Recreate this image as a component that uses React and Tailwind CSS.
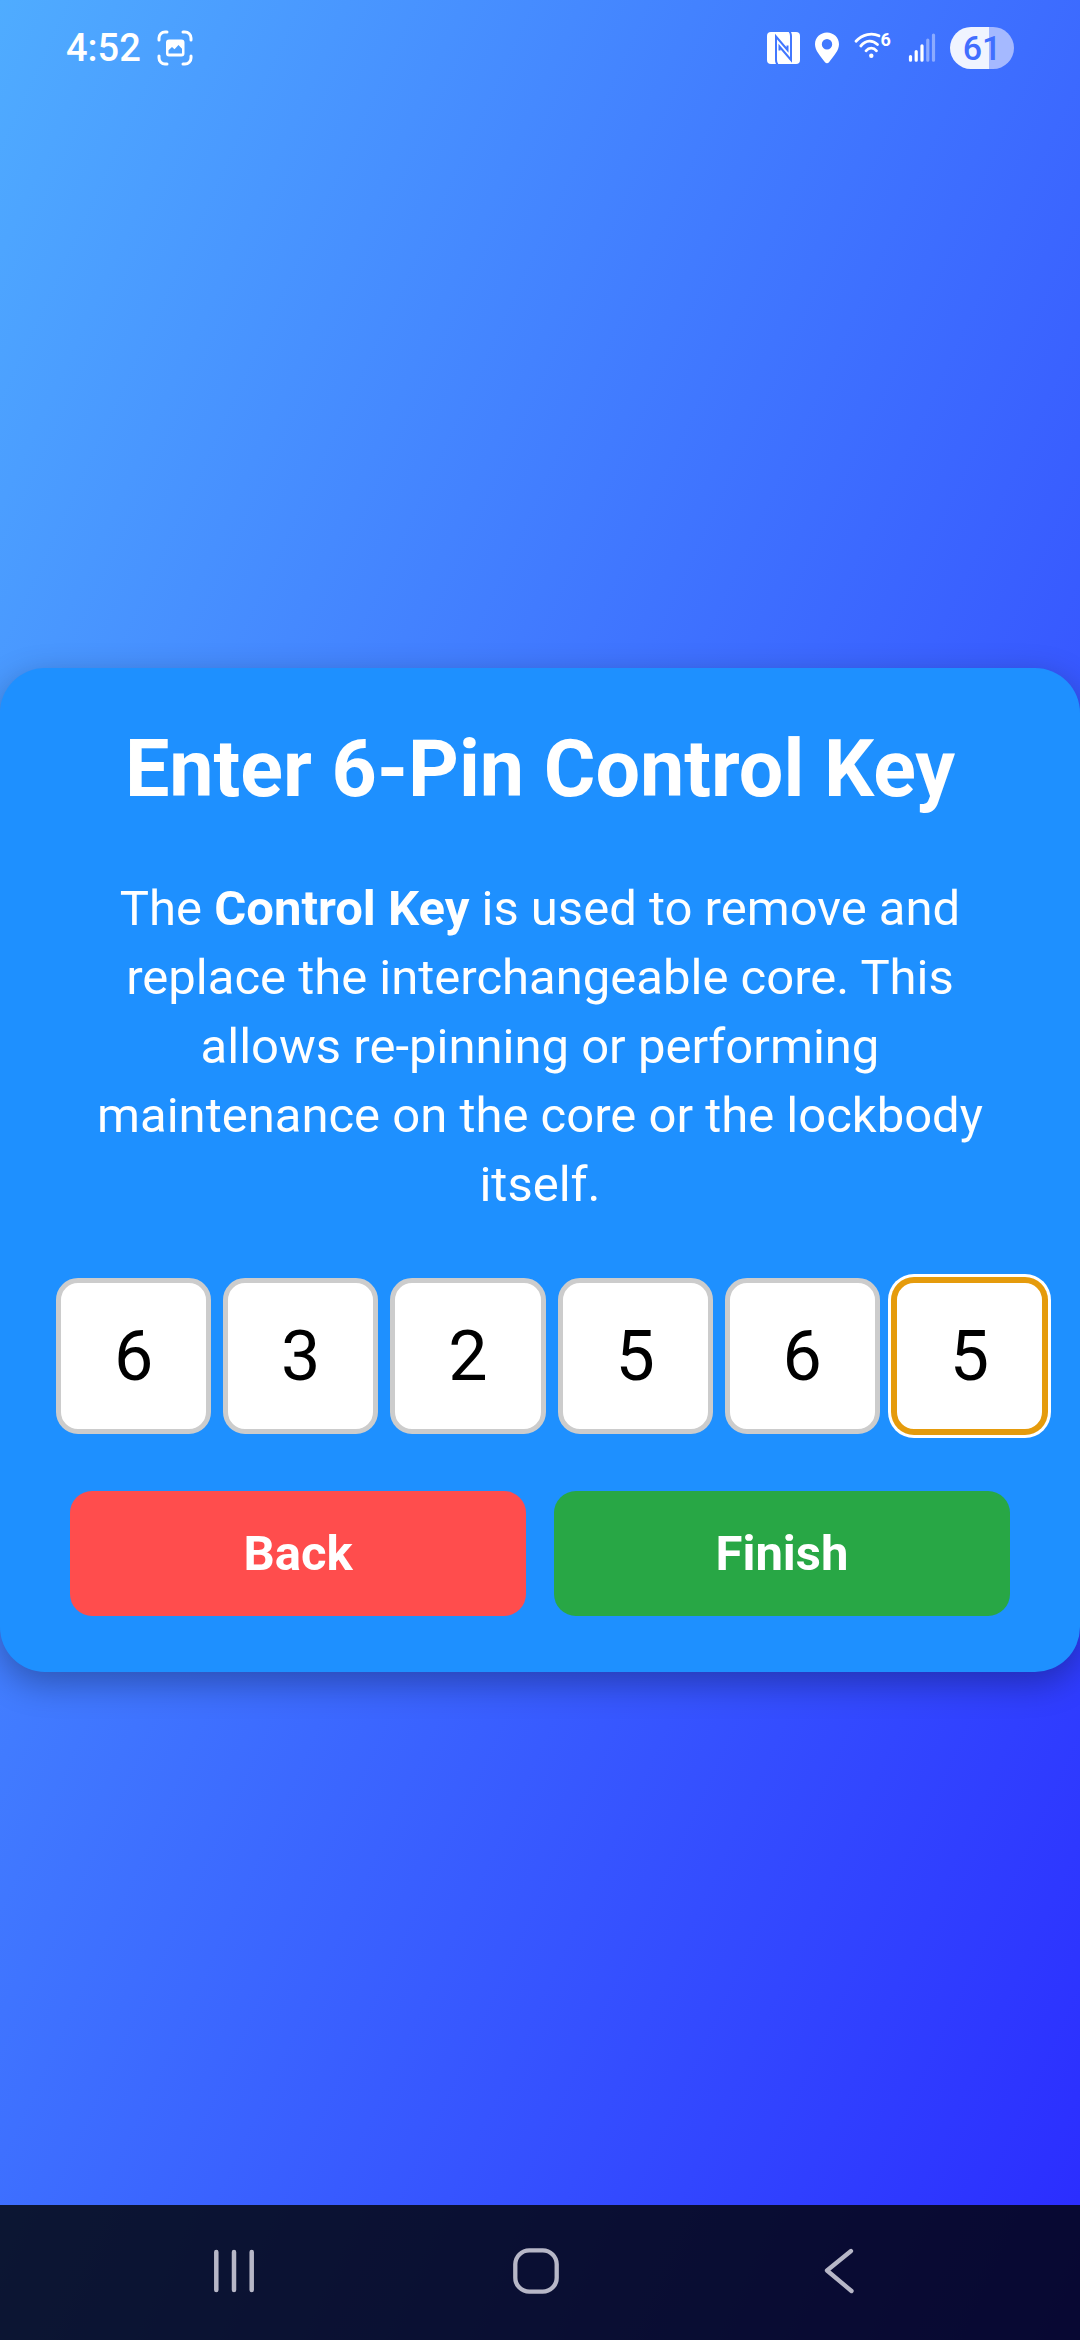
import { useState } from "react";

function CaptureIcon() {
  return (
    <svg aria-hidden="true" className="size-9" viewBox="0 0 36 36" fill="none">
      <path d="M2 10V8a6 6 0 0 1 6-6h2M26 2h2a6 6 0 0 1 6 6v2M34 26v2a6 6 0 0 1-6 6h-2M10 34H8a6 6 0 0 1-6-6v-2" stroke="white" strokeWidth="3" strokeLinecap="round" />
      <path fillRule="evenodd" d="M12 9.500h12.500a3 3 0 0 1 3 3v11a3 3 0 0 1-3 3H12a3 3 0 0 1-3-3v-11a3 3 0 0 1 3-3zM11.500 23.500v-3.200l3.500-3.300 2.500 2.300 4-4.300 3.500 3.800v4.700z" fill="white" />
    </svg>
  );
}

function NfcIcon() {
  return (
    <svg aria-hidden="true" className="h-8 w-[33px]" viewBox="0 0 33 32">
      <rect width="33" height="32" rx="4" fill="white" />
      <path fill="none" stroke="#4277ff" strokeWidth="2" d="M10.500 32.500C9.300 31 9 30 9 28V4.500L20.500 18V13.500" />
      <path fill="none" stroke="#4277ff" strokeWidth="2" d="M12.500 18.500V14.500L24 28V4C24 2 23.700 1 22.500-.5" />
    </svg>
  );
}

function PinIcon() {
  return (
    <svg aria-hidden="true" className="h-8 w-6" viewBox="0 0 24 32">
      <path fill="white" fillRule="evenodd" d="M12 .5C5.500.5 0 5.500 0 12.200c0 6.300 5.500 12 10 18 1 1.300 3 1.300 4 0 4.500-6 10-11.700 10-18C24 5.500 18.500.5 12 .5zM12 7a5.200 5.200 0 1 1 0 10.400A5.200 5.200 0 0 1 12 7z" />
    </svg>
  );
}

function WifiIcon() {
  return (
    <svg aria-label="Wi-Fi 6" className="h-8 w-[38px] overflow-visible" viewBox="0 0 38 32">
      <g fill="none" stroke="white" strokeWidth="2.800" strokeLinecap="round">
        <path d="M2 9.300C8.500 2 18 .5 25 3.800" />
        <path d="M6.800 14C12 7.800 18.500 7.800 23.500 12.600" />
        <path d="M12 18.800c3-3.500 7.500-3.500 10.500 0" />
      </g>
      <circle cx="17.300" cy="23.800" r="2.200" fill="white" />
      <text x="26.500" y="14" fill="white" fontSize="18" fontWeight="700">6</text>
    </svg>
  );
}

function SignalIcon() {
  return (
    <svg aria-hidden="true" className="h-8 w-7 overflow-visible" viewBox="0 0 28 32" stroke="white" strokeWidth="3.200" strokeLinecap="round">
      <path d="M3.500 24.500v3.700M9.200 19.500v8.700M15 13.800v14.400" />
      <path d="M20.800 8V28.200M26.500 3V28.200" opacity="0.400" />
    </svg>
  );
}

function StatusBar() {
  return (
    <header className="flex h-[135px] items-start justify-between px-[66px] pt-[27px] text-white">
      <div className="flex h-[42px] items-center gap-4">
        <time className="text-[38px] leading-[42px] font-medium">4:52</time>
        <CaptureIcon />
      </div>
      <div className="flex h-[42px] items-center gap-[15px]">
        <NfcIcon />
        <PinIcon />
        <WifiIcon />
        <SignalIcon />
        <span className="flex h-[42px] w-16 items-center justify-center rounded-full bg-[linear-gradient(90deg,#f0f4ff_61%,#a5b9ff_61%)] text-[34px] leading-[42px] font-medium text-[#416eff]">
          61
        </span>
      </div>
    </header>
  );
}

function PinInputs() {
  const [digits, setDigits] = useState(["6", "3", "2", "5", "6", "5"]);
  const update = (index, value) =>
    setDigits(digits.map((digit, i) => (i === index ? value.slice(-1) : digit)));

  return (
    <div className="grid grid-cols-6 gap-3 pr-[33px] pl-14">
      {digits.map((digit, index) => (
        <input
          key={index}
          type="text"
          inputMode="numeric"
          aria-label={`Pin ${index + 1}`}
          value={digit}
          onChange={(event) => update(index, event.target.value)}
          className="h-[156px] w-full min-w-0 rounded-[22px] border-5 border-[#ccc] bg-white text-center text-[70px] text-black outline-none last:border-[#e59b0c] last:shadow-[0_0_0_1px_#e59b0c,0_0_0_4px_#fff]"
        />
      ))}
    </div>
  );
}

function NavBar() {
  return (
    <nav aria-label="System" className="grid h-[135px] grid-cols-3 bg-black/80 pr-[90px] pb-[3px] pl-[83px]">
      <button type="button" aria-label="Recent apps" className="flex items-center justify-center">
        <svg className="size-12" viewBox="0 0 48 48" stroke="#b7b7c7" strokeWidth="4.500" strokeLinecap="round">
          <path d="M6.300 5v38M24 5v38M41.700 5v38" />
        </svg>
      </button>
      <button type="button" aria-label="Home" className="flex items-center justify-center">
        <svg className="size-12" viewBox="0 0 48 48" fill="none" stroke="#b7b7c7" strokeWidth="4.300">
          <rect x="3.300" y="3.300" width="41.400" height="41.400" rx="14" />
        </svg>
      </button>
      <button type="button" aria-label="Back" className="flex items-center justify-center">
        <svg className="size-12" viewBox="0 0 48 48" fill="none" stroke="#b7b7c7" strokeWidth="4.300" strokeLinecap="round" strokeLinejoin="round">
          <path d="M36 4L12 23.500L36.500 44" />
        </svg>
      </button>
    </nav>
  );
}

export default function App() {
  return (
    <div className="flex min-h-screen flex-col bg-[linear-gradient(to_bottom_right,#4facff,#2a2aff)] font-[Roboto,sans-serif]">
      <StatusBar />
      <main className="flex flex-1 flex-col justify-center">
        <section className="rounded-[45px] bg-[#1e90ff] py-14 shadow-[0_11px_34px_rgba(0,0,0,0.3)]">
          <h1 className="mb-[60px] px-[70px] text-center text-[79px] leading-[90px] font-bold text-white">
            Enter 6-Pin Control Key
          </h1>
          <p className="mb-[59px] px-[70px] text-center text-[49px] leading-[69px] text-white">
            The <strong className="font-bold">Control Key</strong> is used to remove and replace the
            interchangeable core. This allows re-pinning or performing maintenance on the core or the
            lockbody itself.
          </p>
          <PinInputs />
          <div className="mt-[57px] grid grid-cols-2 gap-7 px-[70px]">
            <button type="button" className="h-[125px] rounded-[22px] bg-[#ff4d4d] text-[49px] font-bold text-white">
              Back
            </button>
            <button type="button" className="h-[125px] rounded-[22px] bg-[#28a745] text-[49px] font-bold text-white">
              Finish
            </button>
          </div>
        </section>
      </main>
      <NavBar />
    </div>
  );
}
